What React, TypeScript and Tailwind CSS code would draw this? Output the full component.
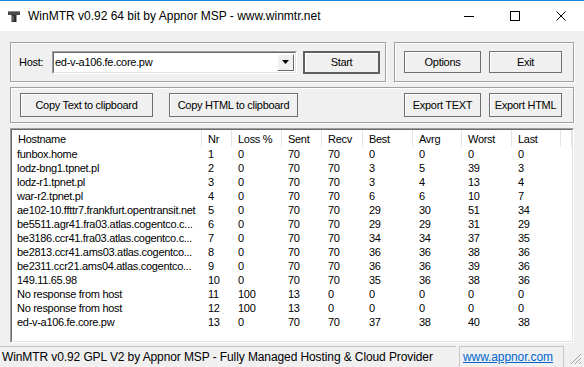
import React from "react";

const cols = [
  { name: "Hostname", w: "w-[190px]" },
  { name: "Nr", w: "w-[30px]" },
  { name: "Loss %", w: "w-[50px]" },
  { name: "Sent", w: "w-[40px]" },
  { name: "Recv", w: "w-[41px]" },
  { name: "Best", w: "w-[50px]" },
  { name: "Avrg", w: "w-[49px]" },
  { name: "Worst", w: "w-[50px]" },
  { name: "Last", w: "w-[49px]" },
];

const rows: (string | number)[][] = [
  ["funbox.home", 1, 0, 70, 70, 0, 0, 0, 0],
  ["lodz-bng1.tpnet.pl", 2, 0, 70, 70, 3, 5, 39, 3],
  ["lodz-r1.tpnet.pl", 3, 0, 70, 70, 3, 4, 13, 4],
  ["war-r2.tpnet.pl", 4, 0, 70, 70, 6, 6, 10, 7],
  ["ae102-10.ffttr7.frankfurt.opentransit.net", 5, 0, 70, 70, 29, 30, 51, 34],
  ["be5511.agr41.fra03.atlas.cogentco.c...", 6, 0, 70, 70, 29, 29, 31, 29],
  ["be3186.ccr41.fra03.atlas.cogentco.c...", 7, 0, 70, 70, 34, 34, 37, 35],
  ["be2813.ccr41.ams03.atlas.cogentco...", 8, 0, 70, 70, 36, 36, 38, 36],
  ["be2311.ccr21.ams04.atlas.cogentco...", 9, 0, 70, 70, 36, 36, 39, 36],
  ["149.11.65.98", 10, 0, 70, 70, 35, 36, 38, 36],
  ["No response from host", 11, 100, 13, 0, 0, 0, 0, 0],
  ["No response from host", 12, 100, 13, 0, 0, 0, 0, 0],
  ["ed-v-a106.fe.core.pw", 13, 0, 70, 70, 37, 38, 40, 38],
];

function Btn({ label, w, h = "h-[23px]", bold }: { label: string; w: string; h?: string; bold?: boolean }) {
  return (
    <button
      className={`${w} ${h} shrink-0 flex items-center justify-center bg-[#f0f0f0] ${
        bold ? "border-2 border-[#5f5f5f]" : "border border-[#6f6f6f]"
      } shadow-[inset_1px_1px_0_#ffffff] text-black`}
    >
      {label}
    </button>
  );
}

function Group({ className, children }: { className: string; children: React.ReactNode }) {
  return (
    <div className={`${className} border border-[#a0a0a0] shadow-[inset_1px_1px_0_#ffffff,1px_1px_0_#ffffff] flex items-center`}>
      {children}
    </div>
  );
}

export default function App() {
  return (
    <div
      className="w-[584px] h-[367px] overflow-hidden bg-[#f0f0f0] flex flex-col text-[11px] tracking-[-0.3px] text-black"
      style={{ fontFamily: "'Liberation Sans', Arial, sans-serif" }}
    >
      {/* title bar */}
      <div className="h-[31px] shrink-0 bg-white border-t border-[#1883d7] flex items-center">
        <svg width="14" height="14" viewBox="0 0 14 14" className="ml-[7px] mr-[7px]">
          <rect x="1" y="2" width="12" height="4" fill="#4a4a4a" />
          <rect x="1" y="2" width="12" height="1" fill="#8a8a8a" />
          <rect x="4.5" y="6" width="5" height="7" fill="#2e2e2e" />
          <rect x="5.5" y="7" width="1" height="5" fill="#8a8a8a" />
        </svg>
        <span className="text-[12px] tracking-normal">WinMTR v0.92 64 bit by Appnor MSP - www.winmtr.net</span>
        <div className="ml-auto flex h-full">
          <div className="w-[46px] flex items-center justify-center">
            <div className="w-[10px] h-[1px] bg-black" />
          </div>
          <div className="w-[46px] flex items-center justify-center">
            <div className="w-[10px] h-[10px] border border-black" />
          </div>
          <div className="w-[46px] flex items-center justify-center">
            <svg width="10" height="10" viewBox="0 0 10 10">
              <path d="M0.5 0.5 L9.5 9.5 M9.5 0.5 L0.5 9.5" stroke="#000" strokeWidth="1" />
            </svg>
          </div>
        </div>
      </div>

      <div className="flex-1 flex flex-col px-[10px] pt-[11px] gap-[5px]">
        {/* row 1 */}
        <div className="flex gap-[8px] h-[40px] shrink-0">
          <Group className="w-[376px] pl-[8px]">
            <span className="w-[25px]">Host:</span>
            <div className="ml-[8px] w-[245px] h-[23px] flex bg-white border-t border-l border-[#a0a0a0] border-r border-b border-r-white border-b-white">
              <div className="flex-1 flex border-t border-l border-[#696969] border-r border-b border-r-[#e3e3e3] border-b-[#e3e3e3]">
                <span className="flex-1 pl-[1px] leading-[19px]">ed-v-a106.fe.core.pw</span>
                <div className="w-[17px] h-[17px] m-[1px] bg-[#f0f0f0] border-t border-l border-white border-r border-b border-r-[#696969] border-b-[#696969] flex items-center justify-center">
                  <svg width="7" height="4" viewBox="0 0 7 4">
                    <path d="M0 0 H7 L3.5 4 Z" fill="#000" />
                  </svg>
                </div>
              </div>
            </div>
            <div className="ml-[6px]">
              <Btn label="Start" w="w-[77px]" bold />
            </div>
          </Group>
          <Group className="w-[180px] pl-[9px] gap-[8px]">
            <Btn label="Options" w="w-[77px]" h="h-[22px]" />
            <Btn label="Exit" w="w-[73px]" h="h-[22px]" />
          </Group>
        </div>

        {/* row 2 */}
        <Group className="h-[36px] shrink-0 px-[9px] justify-between">
          <div className="flex gap-[16px]">
            <Btn label="Copy Text to clipboard" w="w-[133px]" h="h-[24px]" />
            <Btn label="Copy HTML to clipboard" w="w-[129px]" h="h-[24px]" />
          </div>
          <div className="flex gap-[8px] mr-[2px]">
            <Btn label="Export TEXT" w="w-[77px]" h="h-[24px]" />
            <Btn label="Export HTML" w="w-[73px]" h="h-[24px]" />
          </div>
        </Group>

        {/* list view */}
        <div className="h-[215px] shrink-0 flex border-t border-l border-[#a0a0a0] border-r border-b border-r-white border-b-white">
          <div className="flex-1 bg-white border-t border-l border-[#696969] border-r border-b border-r-[#e3e3e3] border-b-[#e3e3e3] overflow-hidden">
            <div className="flex h-[17px] bg-white">
              {cols.map((c) => (
                <div key={c.name} className={`${c.w} shrink-0 pl-[6px] leading-[18px] border-r border-[#e5e5e5]`}>
                  {c.name}
                </div>
              ))}
              <div className="flex-1 border-r border-[#e5e5e5]" />
            </div>
            <div>
              {rows.map((r, i) => (
                <div key={i} className="flex h-[14px] leading-[14px]">
                  {r.map((v, j) => (
                    <div key={j} className={`${cols[j].w} shrink-0 ${j === 0 ? "pl-[5px]" : "pl-[6px]"} whitespace-nowrap overflow-hidden`}>
                      {v}
                    </div>
                  ))}
                </div>
              ))}
            </div>
          </div>
        </div>
      </div>

      {/* status bar */}
      <div className="h-[24px] shrink-0 flex items-end pt-[3px] text-[12px] tracking-[-0.1px]">
        <div className="w-[456px] h-[21px] border-t border-[#c8c8c8] pl-[2px] leading-[21px]">
          WinMTR v0.92 GPL V2 by Appnor MSP - Fully Managed Hosting &amp; Cloud Provider
        </div>
        <div className="ml-[3px] w-[105px] h-[21px] border-t border-l border-r border-[#c8c8c8] pl-[3px] leading-[21px]">
          <span className="text-[#0066cc] underline">www.appnor.com</span>
        </div>
        <div className="flex-1 h-[21px] flex items-end justify-end pr-[2px] pb-[2px]">
          <svg width="12" height="12" viewBox="0 0 12 12">
            <path d="M11 1 L1 11 M11 5 L5 11 M11 9 L9 11" stroke="#a0a0a0" strokeWidth="1" />
          </svg>
        </div>
      </div>
    </div>
  );
}
